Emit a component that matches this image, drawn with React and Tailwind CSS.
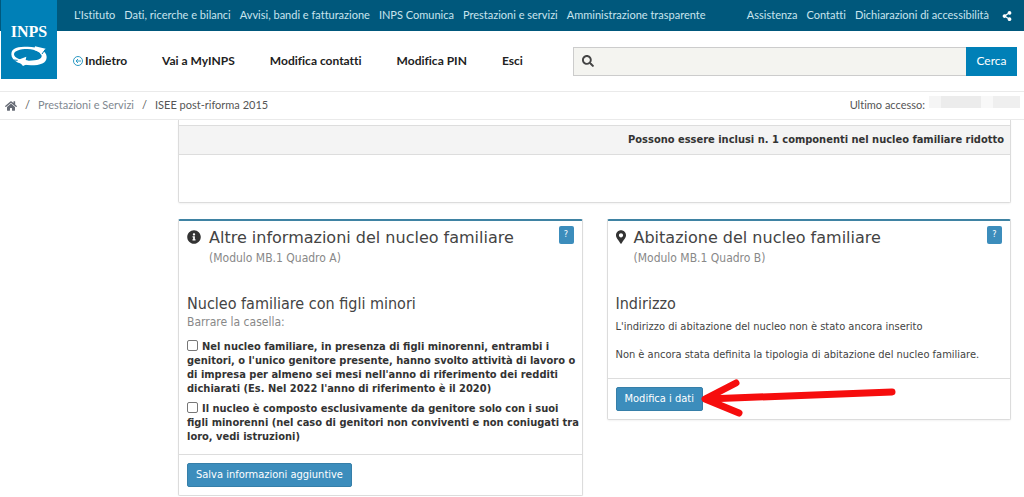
import { FaHome, FaSearch, FaShareAlt, FaInfoCircle, FaMapMarkerAlt } from "react-icons/fa";

const topLinks = ["L'Istituto", "Dati, ricerche e bilanci", "Avvisi, bandi e fatturazione", "INPS Comunica", "Prestazioni e servizi", "Amministrazione trasparente"];
const helpLinks = ["Assistenza", "Contatti", "Dichiarazioni di accessibilità"];
const navLinks = ["Vai a MyINPS", "Modifica contatti", "Modifica PIN", "Esci"];

function Logo() {
  return (
    <a href="#" aria-label="INPS" className="absolute left-px top-0 flex h-[79px] w-14 flex-col items-center bg-[#0080b7] pt-[18px] text-white">
      <span className="font-['Liberation_Serif',serif] text-base font-bold leading-7">INPS</span>
      <svg viewBox="0 0 108 60" className="h-5 w-9" aria-hidden="true">
        <path fill="#fff" fillRule="evenodd" d="M50 2C82 2 107 14 107 33S88 58 60 58 1 46 1 25 22 2 50 2ZM50 9C26 9 9 15 9 25s20 19 45 19 38-5 38-14S74 9 50 9Z" />
        <path fill="#fff" d="M72 1 104 8 90 26 86 18 70 12ZM36 60 20 42 46 32 44 42 62 48Z" />
        <path stroke="#0080b7" strokeWidth="3" d="M103 10 93 24M20 43 8 42" />
      </svg>
    </a>
  );
}

function BackIcon() {
  return (
    <svg viewBox="0 0 12 12" className="size-3 text-[#2f9bc4]" fill="none" stroke="currentColor" aria-hidden="true">
      <circle cx="6" cy="6" r="4.5" />
      <path d="M9 6H4M6 4 4 6l2 2" />
    </svg>
  );
}

function ActionButton({ children }) {
  return (
    <button type="button" className="block rounded-xs border border-[#367fa9] bg-[#3c8dbc] px-2 py-[3px] text-[11px] leading-4 text-white">
      {children}
    </button>
  );
}

function Card({ icon, title, subtitle, action, children }) {
  return (
    <section className="rounded-xs border border-t-2 border-[#dcdcdc] border-t-[#3f83a3] bg-white shadow-xs">
      <header className="flex items-start px-2 pt-[3px]">
        <span className="mt-1.5 shrink-0 text-sm text-[#333]">{icon}</span>
        <div className="ml-2 grow">
          <h2 className="font-['DejaVu_Sans',sans-serif] text-base leading-7">{title}</h2>
          <p className="text-xs leading-3 text-[#888]">{subtitle}</p>
        </div>
        <button type="button" aria-label="Aiuto" className="mt-0.5 h-[18px] w-[15px] rounded-xs bg-[#3c8dbc] text-[9px] text-white">?</button>
      </header>
      <div className="pl-2 pt-7">{children}</div>
      <footer className="border-t border-[#ddd] p-2">{action}</footer>
    </section>
  );
}

export default function App() {
  return (
    <div className="bg-white font-['DejaVu_Sans_Condensed','DejaVu_Sans',sans-serif] text-[#444]">
      <header className="relative font-['Lato',sans-serif] [font-variant-ligatures:none]">
        <div className="flex h-[31px] items-center justify-between bg-[#00587c] pl-[74px] pr-3 text-[11px] text-[#c9e4ee]">
          <nav className="flex gap-[9px] whitespace-nowrap">
            {topLinks.map((t) => <a key={t} href="#">{t}</a>)}
          </nav>
          <nav className="flex items-center gap-[9px] whitespace-nowrap">
            {helpLinks.map((t) => <a key={t} href="#">{t}</a>)}
            <a href="#" aria-label="Condividi" className="ml-1 text-[10px] text-white"><FaShareAlt /></a>
          </nav>
        </div>
        <Logo />
        <div className="flex h-[60px] items-center pl-[72px] pr-[7px]">
          <nav className="flex gap-[35px] whitespace-nowrap text-xs font-bold text-[#222]">
            <a href="#" className="flex items-center gap-px"><BackIcon />Indietro</a>
            {navLinks.map((t) => <a key={t} href="#">{t}</a>)}
          </nav>
          <form className="ml-auto flex h-[29px] w-[444px]">
            <label className="flex grow items-center border border-r-0 border-[#ccc] bg-[#f4f4f0] pl-2">
              <FaSearch className="size-3 text-[#444]" />
              <input type="search" aria-label="Cerca nel sito" className="min-w-0 grow bg-transparent px-2 text-xs outline-none" />
            </label>
            <button type="button" className="w-[51px] bg-[#0080b7] text-xs text-white">Cerca</button>
          </form>
        </div>
        <div className="flex h-[29px] items-center justify-between border-y border-[#eaeaea] pl-[5px] pr-1 text-[11px] text-[#555]">
          <nav aria-label="Percorso" className="flex items-center gap-2">
            <a href="#" aria-label="Home"><FaHome className="size-3 text-[#666b75]" /></a>
            <span>/</span>
            <a href="#" className="text-[#808890]">Prestazioni e Servizi</a>
            <span>/</span>
            <span>ISEE post-riforma 2015</span>
          </nav>
          <div className="flex items-center gap-1">
            <span>Ultimo accesso:</span>
            <span className="mb-2 flex h-3 w-[91px]">
              <span className="w-3 bg-[#f5f5f5]" />
              <span className="w-10 bg-[#ececec]" />
              <span className="w-3 bg-[#f8f8f8]" />
              <span className="grow bg-[#efefef]" />
            </span>
          </div>
        </div>
      </header>

      <main className="pl-[178px] pr-[13px]">
        <section className="rounded-b-xs border border-t-0 border-[#dcdcdc] pb-[47px] pt-[5px] shadow-xs">
          <p className="border-y border-[#ddd] bg-[#f4f4f4] px-1.5 py-1.5 text-right text-[11px] font-bold leading-4 text-[#333]">
            Possono essere inclusi n. 1 componenti nel nucleo familiare ridotto
          </p>
        </section>

        <div className="mt-4 grid grid-cols-2 items-start gap-6">
          <Card
            icon={<FaInfoCircle />}
            title="Altre informazioni del nucleo familiare"
            subtitle="(Modulo MB.1 Quadro A)"
            action={<ActionButton>Salva informazioni aggiuntive</ActionButton>}
          >
            <h3 className="text-base leading-6">Nucleo familiare con figli minori</h3>
            <p className="text-xs leading-3 text-[#888]">Barrare la casella:</p>
            <div className="space-y-1.5 pb-2.5 pt-3 text-[11px] font-bold leading-[14px] text-[#333]">
              <label className="block">
                <input type="checkbox" className="mr-1 size-[11px] appearance-none rounded-xs border border-[#777] bg-white align-[-1px]" />
                Nel nucleo familiare, in presenza di figli minorenni, entrambi i genitori, o l'unico genitore presente, hanno svolto attività di lavoro o di impresa per almeno sei mesi nell'anno di riferimento dei redditi dichiarati (Es. Nel 2022 l'anno di riferimento è il 2020)
              </label>
              <label className="block">
                <input type="checkbox" className="mr-1 size-[11px] appearance-none rounded-xs border border-[#777] bg-white align-[-1px]" />
                Il nucleo è composto esclusivamente da genitore solo con i suoi figli minorenni (nel caso di genitori non conviventi e non coniugati tra loro, vedi istruzioni)
              </label>
            </div>
          </Card>

          <Card
            icon={<FaMapMarkerAlt className="w-2.5" />}
            title="Abitazione del nucleo familiare"
            subtitle="(Modulo MB.1 Quadro B)"
            action={
              <div className="relative">
                <ActionButton>Modifica i dati</ActionButton>
                <svg viewBox="0 0 200 44" className="pointer-events-none absolute -top-2 left-[83px] h-11 w-[200px]" fill="none" stroke="#f60d0d" strokeWidth="7" strokeLinecap="round" strokeLinejoin="round" aria-hidden="true">
                  <path d="M193 13 8 20M37 4 6 20l34 14" />
                </svg>
              </div>
            }
          >
            <h3 className="text-base leading-6">Indirizzo</h3>
            <p className="pt-1 text-[11px] leading-[14px]">L'indirizzo di abitazione del nucleo non è stato ancora inserito</p>
            <p className="pb-4 pt-3.5 text-[11px] leading-[14px]">Non è ancora stata definita la tipologia di abitazione del nucleo familiare.</p>
          </Card>
        </div>
      </main>
    </div>
  );
}
